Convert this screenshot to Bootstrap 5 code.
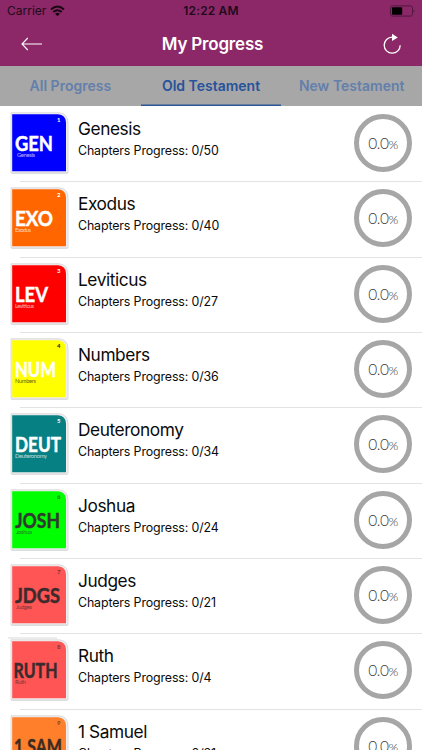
<!DOCTYPE html>
<html lang="en">
<head>
<meta charset="utf-8">
<meta name="viewport" content="width=device-width, initial-scale=1">
<title>My Progress</title>
<link href="https://cdn.jsdelivr.net/npm/bootstrap@5.3.0/dist/css/bootstrap.min.css" rel="stylesheet">
<style>
body{font-family:Inter,"Liberation Sans",sans-serif;color:#0a0a0a;height:750px}
.top-area{height:66px;background:#8c2868}
.status{height:22px;padding:0 7px;font-size:12px;line-height:22px;color:#210b1a}
.status>*{flex:1 1 0}
.clock{letter-spacing:.15px}
.titlebar{height:43px;padding:0 20px 0 21px;color:#fff}
.titlebar h1{font-size:17px;font-weight:600;letter-spacing:-.2px;line-height:42px}
.tabs{height:40px;background:#a7a7a7}
.tabs a{flex:1 1 0;font-size:14px;font-weight:600;line-height:40px;height:40px;color:#637fab;text-decoration:none;white-space:nowrap}
.tabs a.active{color:#27529c;box-shadow:inset 0 -1.5px #2d5796}
.book{height:75.33px;padding:0 10px 0 10px}
.book+.book::before{content:"";position:absolute;left:20px;right:0;top:0;height:1px;background:#e3e3e5}
.cover{width:59px;height:64px;margin-top:5px;flex:none}
.cover text{font-family:Lato,sans-serif}
.cover .abbr{font-weight:700;font-size:21px;stroke-width:.5px}
.cover .full{font-size:5.8px;opacity:.7}
.cover .num{font-size:6px;font-weight:700}
.book-text{margin-left:9px;padding-top:12px}
.book-text h2{font-size:17.3px;line-height:22px;font-weight:400;letter-spacing:-.42px}
.book-text p{font-size:12.4px;line-height:16px;margin-top:3px;letter-spacing:-.13px}
.ring{width:58px;height:58px;border:5px solid #a6a6a6;margin-top:8px;font:300 15.5px Lato,sans-serif;color:#383838;letter-spacing:-.5px;flex:none}
.ring small{font-size:12.5px}
</style>
<script src="https://cdn.jsdelivr.net/npm/bootstrap@5.3.0/dist/js/bootstrap.bundle.min.js"></script>
</head>
<body class="bg-white overflow-hidden">
<svg width="0" height="0" class="d-none"><defs>
<symbol id="frame" viewBox="0 0 59 64"><path d="M1 1.8H49Q58 2.5 58 12V61.8H1Z" fill="#f0eef0" stroke="#d6d3d6" stroke-width=".8"/><path d="M1.5 62.5H57.5" stroke="#cfcfcf" stroke-width=".6"/><path d="M2.2 3.2H48Q56 4 56 11.5V60.3H2.2Z" fill="currentColor"/></symbol>
</defs></svg>
<header class="top-area">
<div class="status d-flex align-items-center">
<div class="d-flex align-items-center"><span>Carrier</span><svg class="ms-1" width="15" height="12" viewBox="0 0 15 12" fill="none" stroke="#170812" stroke-width="2"><path d="M1 4.4Q7.5-1.4 14 4.4M3.3 7Q7.5 3.4 11.7 7"/><path d="M5.1 8.7Q7.5 6.9 9.9 8.7L7.5 11.2Z" fill="#170812" stroke="none"/></svg></div>
<div class="clock text-center fw-semibold">12:22 AM</div>
<div class="d-flex justify-content-end"><svg width="26" height="12" viewBox="0 0 26 12"><rect x="1.5" y=".9" width="22" height="10.2" rx="2" fill="none" stroke="#521840"/><rect x="3" y="2.3" width="10.2" height="7.4" rx=".7" fill="#000"/><path d="M24.5 4.4Q26.5 6 24.5 7.6Z" fill="#521840"/></svg></div>
</div>
<div class="titlebar d-flex justify-content-between align-items-center">
<svg width="21" height="14" viewBox="0 0 21 14" fill="none" stroke="#fff" stroke-width="1.1"><path d="M21 7H1M6.8 1L1 7L6.8 13"/></svg>
<h1 class="m-0">My Progress</h1>
<svg width="19" height="22" viewBox="0 0 19 22"><path d="M17.2 12.2A8 8 0 1 1 9.2 4.2H11" fill="none" stroke="#fff" stroke-width="1.3"/><path d="M9 .8L14.8 4.4L9 8Z" fill="#fff"/></svg>
</div>
</header>
<nav class="tabs d-flex text-center"><a href="#">All Progress</a><a href="#" class="active">Old Testament</a><a href="#">New Testament</a></nav>
<main>
<article class="book d-flex position-relative"><svg class="cover" viewBox="0 0 59 64"><use href="#frame" color="#0000fe"/><g fill="#fff" stroke="none"><text class="abbr" x="5" y="39.8" stroke="#fff" textLength="38" lengthAdjust="spacingAndGlyphs">GEN</text><text class="full" x="7" y="46" textLength="18">Genesis</text><text class="num" x="47" y="10.5">1</text></g></svg><div class="book-text flex-grow-1"><h2 class="m-0">Genesis</h2><p class="mb-0">Chapters Progress: 0/50</p></div><div class="ring rounded-circle d-flex align-items-center justify-content-center"><span>0.0<small>%</small></span></div></article>
<article class="book d-flex position-relative"><svg class="cover" viewBox="0 0 59 64"><use href="#frame" color="#ff6600"/><g fill="#fff"><text class="abbr" x="5" y="39.8" stroke="#fff" textLength="38" lengthAdjust="spacingAndGlyphs">EXO</text><text class="full" x="5" y="46" textLength="16">Exodus</text><text class="num" x="47" y="10.5">2</text></g></svg><div class="book-text flex-grow-1"><h2 class="m-0">Exodus</h2><p class="mb-0">Chapters Progress: 0/40</p></div><div class="ring rounded-circle d-flex align-items-center justify-content-center"><span>0.0<small>%</small></span></div></article>
<article class="book d-flex position-relative"><svg class="cover" viewBox="0 0 59 64"><use href="#frame" color="#fe0000"/><g fill="#fff"><text class="abbr" x="5" y="39.8" stroke="#fff" textLength="33" lengthAdjust="spacingAndGlyphs">LEV</text><text class="full" x="5" y="46" textLength="19">Leviticus</text><text class="num" x="47" y="10.5">3</text></g></svg><div class="book-text flex-grow-1"><h2 class="m-0">Leviticus</h2><p class="mb-0">Chapters Progress: 0/27</p></div><div class="ring rounded-circle d-flex align-items-center justify-content-center"><span>0.0<small>%</small></span></div></article>
<article class="book d-flex position-relative"><svg class="cover" viewBox="0 0 59 64"><use href="#frame" color="#ffff00"/><g fill="#222"><text class="abbr" x="5" y="39.8" fill="#fff" stroke="#fff" textLength="41" lengthAdjust="spacingAndGlyphs">NUM</text><text class="full" x="5" y="46" textLength="21">Numbers</text><text class="num" x="47" y="10.5">4</text></g></svg><div class="book-text flex-grow-1"><h2 class="m-0">Numbers</h2><p class="mb-0">Chapters Progress: 0/36</p></div><div class="ring rounded-circle d-flex align-items-center justify-content-center"><span>0.0<small>%</small></span></div></article>
<article class="book d-flex position-relative"><svg class="cover" viewBox="0 0 59 64"><use href="#frame" color="#068083"/><g fill="#fff"><text class="abbr" x="5" y="39.8" stroke="#fff" textLength="46" lengthAdjust="spacingAndGlyphs">DEUT</text><text class="full" x="5" y="46" textLength="32">Deuteronomy</text><text class="num" x="47" y="10.5">5</text></g></svg><div class="book-text flex-grow-1"><h2 class="m-0">Deuteronomy</h2><p class="mb-0">Chapters Progress: 0/34</p></div><div class="ring rounded-circle d-flex align-items-center justify-content-center"><span>0.0<small>%</small></span></div></article>
<article class="book d-flex position-relative"><svg class="cover" viewBox="0 0 59 64"><use href="#frame" color="#00ff00"/><g fill="#303a30"><text class="abbr" x="5" y="39.8" stroke="#303a30" textLength="45" lengthAdjust="spacingAndGlyphs">JOSH</text><text class="full" x="6" y="46" textLength="16">Joshua</text><text class="num" x="47" y="10.5" opacity=".7">6</text></g></svg><div class="book-text flex-grow-1"><h2 class="m-0">Joshua</h2><p class="mb-0">Chapters Progress: 0/24</p></div><div class="ring rounded-circle d-flex align-items-center justify-content-center"><span>0.0<small>%</small></span></div></article>
<article class="book d-flex position-relative"><svg class="cover" viewBox="0 0 59 64"><use href="#frame" color="#ff5555"/><g fill="#3b2b2d"><text class="abbr" x="5" y="39.8" stroke="#3b2b2d" textLength="45" lengthAdjust="spacingAndGlyphs">JDGS</text><text class="full" x="6" y="46" textLength="16">Judges</text><text class="num" x="47" y="10.5" opacity=".7">7</text></g></svg><div class="book-text flex-grow-1"><h2 class="m-0">Judges</h2><p class="mb-0">Chapters Progress: 0/21</p></div><div class="ring rounded-circle d-flex align-items-center justify-content-center"><span>0.0<small>%</small></span></div></article>
<article class="book d-flex position-relative"><svg class="cover overflow-visible" viewBox="0 0 59 64"><path d="M-2 0H47" stroke="#d9d9d9"/><use href="#frame" color="#ff5555"/><g fill="#3b2b2d"><text class="abbr" x="3.5" y="39.8" stroke="#3b2b2d" textLength="44" lengthAdjust="spacingAndGlyphs">RUTH</text><text class="full" x="5" y="46" textLength="11">Ruth</text><text class="num" x="47" y="10.5" opacity=".7">8</text></g></svg><div class="book-text flex-grow-1"><h2 class="m-0">Ruth</h2><p class="mb-0">Chapters Progress: 0/4</p></div><div class="ring rounded-circle d-flex align-items-center justify-content-center"><span>0.0<small>%</small></span></div></article>
<article class="book d-flex position-relative"><svg class="cover" viewBox="0 0 59 64"><use href="#frame" color="#ff7f2a"/><g fill="#3b2b22"><text class="abbr" x="4" y="39.8" stroke="#3b2b22" textLength="48" lengthAdjust="spacingAndGlyphs">1 SAM</text><text class="num" x="47" y="10.5" opacity=".7">9</text></g></svg><div class="book-text flex-grow-1"><h2 class="m-0">1 Samuel</h2><p class="mb-0">Chapters Progress: 0/31</p></div><div class="ring rounded-circle d-flex align-items-center justify-content-center"><span>0.0<small>%</small></span></div></article>
</main>
</body>
</html>
